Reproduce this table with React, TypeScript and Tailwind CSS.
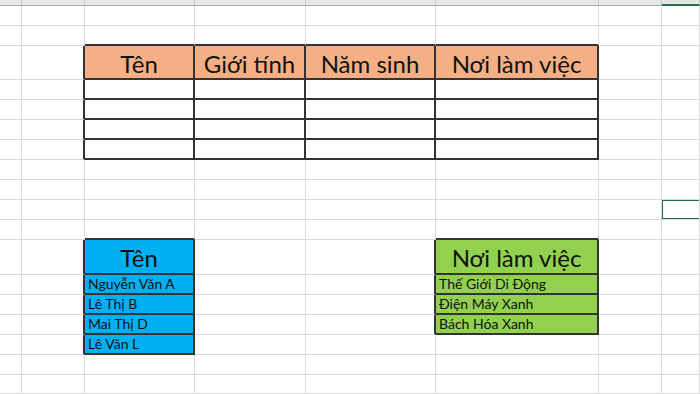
type Block = {
  row: number;
  col: number;
  headFill: string;
  bodyFill: string;
  cells: string[][];
};

type Hit = { text: string; fill: string; head: boolean };

// column widths and row heights of the visible sheet area
const cols = [
  "w-[22px]",
  "w-[63px]",
  "w-[110px]",
  "w-[111px]",
  "w-[130px]",
  "w-[163px]",
  "w-[63px]",
  "w-[38px]",
];

const rows = [
  "h-[20px]",
  "h-[20px]",
  "h-[34px]",
  "h-[20px]",
  "h-[20px]",
  "h-[20px]",
  "h-[20px]",
  "h-[20px]",
  "h-[20px]",
  "h-[20px]",
  "h-[20px]",
  "h-[35px]",
  "h-[20px]",
  "h-[20px]",
  "h-[20px]",
  "h-[20px]",
  "h-[20px]",
  "h-[19px]",
];

const blocks: Block[] = [
  {
    row: 2,
    col: 2,
    headFill: "bg-[#f4b084]",
    bodyFill: "bg-white",
    cells: [
      ["Tên", "Giới tính", "Năm sinh", "Nơi làm việc"],
      ["", "", "", ""],
      ["", "", "", ""],
      ["", "", "", ""],
      ["", "", "", ""],
    ],
  },
  {
    row: 11,
    col: 2,
    headFill: "bg-[#00b0f0]",
    bodyFill: "bg-[#00b0f0]",
    cells: [["Tên"], ["Nguyễn Văn A"], ["Lê Thị B"], ["Mai Thị D"], ["Lê Văn L"]],
  },
  {
    row: 11,
    col: 5,
    headFill: "bg-[#92d050]",
    bodyFill: "bg-[#92d050]",
    cells: [["Nơi làm việc"], ["Thế Giới Di Động"], ["Điện Máy Xanh"], ["Bách Hóa Xanh"]],
  },
];

const lookup = (r: number, c: number): Hit | null => {
  for (const b of blocks) {
    const dr = r - b.row;
    const dc = c - b.col;
    if (dr >= 0 && dr < b.cells.length && dc >= 0 && dc < b.cells[0].length) {
      return { text: b.cells[dr][dc], fill: dr === 0 ? b.headFill : b.bodyFill, head: dr === 0 };
    }
  }
  return null;
};

const SheetCell = ({ r, c }: { r: number; c: number }) => {
  const hit = lookup(r, c);
  const darkRight = !!hit || !!lookup(r, c + 1);
  const darkBottom = !!hit || !!lookup(r + 1, c);
  const selected = r === 9 && c === 7;

  return (
    <div
      className={[
        cols[c],
        "relative shrink-0 flex overflow-hidden text-[#111]",
        darkRight ? "border-r-2 border-r-[#333]" : "border-r border-r-[#dadada]",
        darkBottom ? "border-b-2 border-b-[#333]" : "border-b border-b-[#dadada]",
        hit ? hit.fill : "bg-white",
        hit?.head ? "items-center justify-center text-[24px] leading-none pt-[3px]" : "items-end pl-[3px] pb-[2px] text-[14px] leading-none",
      ].join(" ")}
    >
      {hit?.text && <span className="whitespace-nowrap">{hit.text}</span>}
      {selected && (
        <div className="absolute -top-px -left-px right-0 -bottom-px border-2 border-r-0 border-[#217346]" />
      )}
    </div>
  );
};

export default function App() {
  return (
    <div className="w-[700px] h-[394px] overflow-hidden bg-white font-['Lato','Open_Sans',sans-serif]">
      {/* column header strip, scrolled almost out of view */}
      <div className="flex h-[6px]">
        {cols.map((w, c) => (
          <div
            key={c}
            className={`${w} shrink-0 bg-[#e6e6e6] border-r border-r-[#c8c8c8] ${
              c === 7 ? "border-b-2 border-b-[#217346]" : "border-b border-b-[#ababab]"
            }`}
          />
        ))}
      </div>
      {rows.map((h, r) => (
        <div key={r} className={`flex ${h}`}>
          {cols.map((_, c) => (
            <SheetCell key={c} r={r} c={c} />
          ))}
        </div>
      ))}
    </div>
  );
}
